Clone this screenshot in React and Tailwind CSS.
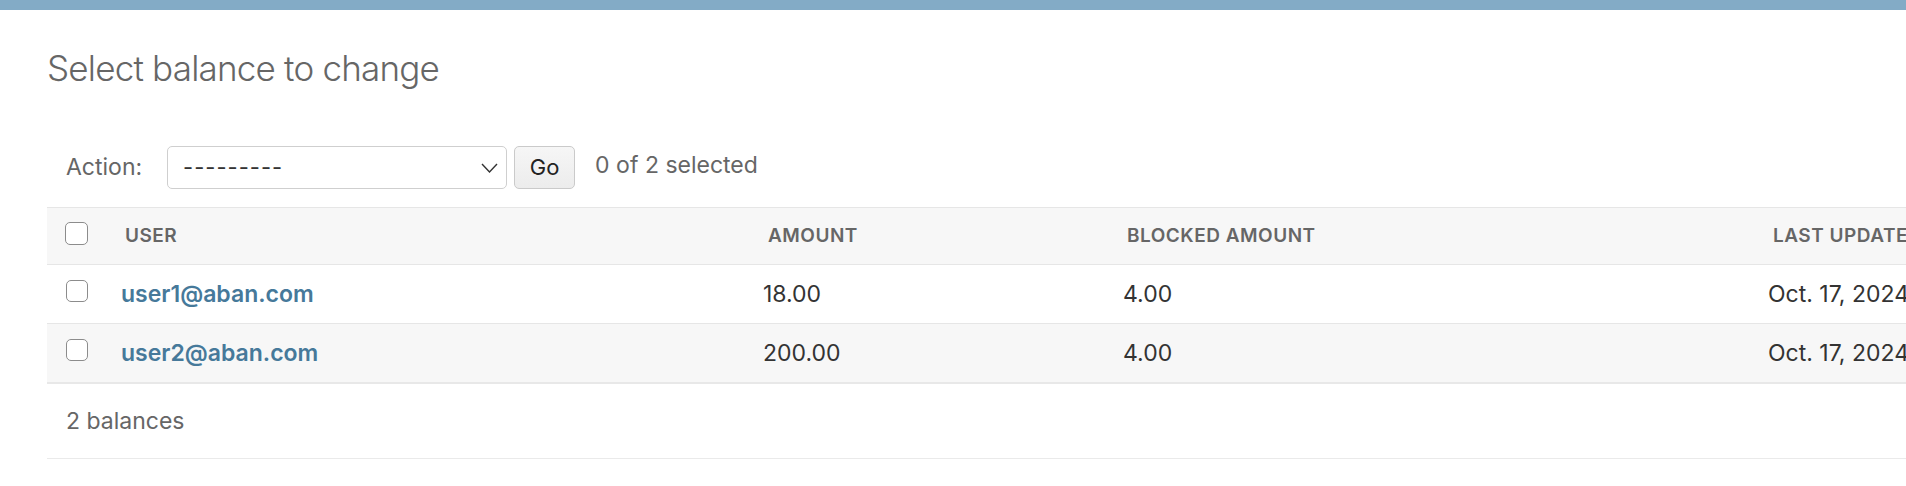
import React, { useState } from 'react';

const rows = [
  { id: 1, user: 'user1@aban.com', amount: '18.00', blocked: '4.00', updated: 'Oct. 17, 2024, 3:12 p.m.' },
  { id: 2, user: 'user2@aban.com', amount: '200.00', blocked: '4.00', updated: 'Oct. 17, 2024, 3:12 p.m.' },
];

const Checkbox = ({ checked, onChange, big }) => (
  <button
    type="button"
    onClick={onChange}
    className={`${big ? 'w-[23px] h-[23px]' : 'w-[22px] h-[22px]'} rounded-[5px] border-[1.5px] border-[#8c8c8c] bg-white flex items-center justify-center`}
  >
    {checked && <span className="w-[10px] h-[10px] rounded-[2px] bg-[#417690]" />}
  </button>
);

const App = () => {
  const [selected, setSelected] = useState([]);

  const toggle = (id) => {
    setSelected(selected.includes(id) ? selected.filter((s) => s !== id) : [...selected, id]);
  };

  const toggleAll = () => {
    setSelected(selected.length === rows.length ? [] : rows.map((r) => r.id));
  };

  const grid = 'grid grid-cols-[59px_642px_360px_645px_400px]';

  return (
    <div
      className="w-full h-[486px] overflow-hidden bg-white"
      style={{ fontFamily: 'Inter, "Liberation Sans", sans-serif' }}
    >
      <div className="h-[10px] bg-[#83abc6]" />

      <div className="pl-[47px] w-[2200px]">
        <h1 className="mt-[36px] text-[35px] leading-[44px] font-light text-[#666] tracking-[-0.8px]">
          Select balance to change
        </h1>

        {/* actions */}
        <div className="mt-[56px] flex items-center h-[43px]">
          <label className="ml-[19px] text-[23px] text-[#666]">Action:</label>
          <div className="ml-[25px] w-[340px] h-[43px] rounded-[5px] border border-[#cfcfcf] bg-white flex items-center justify-between pl-[15px] pr-[8px]">
            <span className="text-[22px] text-[#333] tracking-[1px]">---------</span>
            <svg width="17" height="10" viewBox="0 0 17 10" fill="none">
              <polyline points="1,1 8.5,9 16,1" stroke="#333" strokeWidth="1.4" />
            </svg>
          </div>
          <button
            type="button"
            className="ml-[7px] w-[61px] h-[43px] rounded-[5px] border border-[#cacaca] bg-gradient-to-b from-[#f6f6f6] to-[#ececec] text-[22px] text-[#222]"
          >
            Go
          </button>
          <span className="ml-[20px] mb-[4px] text-[23px] text-[#666]">
            {selected.length} of {rows.length} selected
          </span>
        </div>

        {/* results table */}
        <div className="mt-[18px]">
          <div className={`${grid} h-[58px] bg-[#f7f7f7] border-y border-[#e6e6e6] items-center text-[19px] font-semibold text-[#666] uppercase tracking-[0.5px]`}>
            <div className="pl-[18px] pb-[5px] flex">
              <Checkbox big checked={selected.length === rows.length} onChange={toggleAll} />
            </div>
            <div className="pl-[19px]">User</div>
            <div className="pl-[20px]">Amount</div>
            <div className="pl-[19px]">Blocked amount</div>
            <div className="pl-[20px]">Last updated</div>
          </div>

          {rows.map((r, i) => (
            <div
              key={r.id}
              className={`${grid} items-center text-[23px] text-[#333] ${
                i % 2 ? 'bg-[#f7f7f7] h-[60px] border-b-2 border-[#e8e8e8]' : 'bg-white h-[59px] border-b border-[#e6e6e6]'
              }`}
            >
              <div className="pl-[19px] pb-[6px] flex">
                <Checkbox checked={selected.includes(r.id)} onChange={() => toggle(r.id)} />
              </div>
              <a href="#" className="pl-[15px] font-semibold text-[#46799a]">
                {r.user}
              </a>
              <div className="pl-[15px]">{r.amount}</div>
              <div className="pl-[15px]">{r.blocked}</div>
              <div className="pl-[15px] whitespace-nowrap">{r.updated}</div>
            </div>
          ))}
        </div>

        {/* paginator */}
        <div className="h-[75px] flex items-center border-b border-[#eaeaea] pl-[19px] text-[23px] text-[#666]">
          2 balances
        </div>
      </div>
    </div>
  );
};

export default App;
